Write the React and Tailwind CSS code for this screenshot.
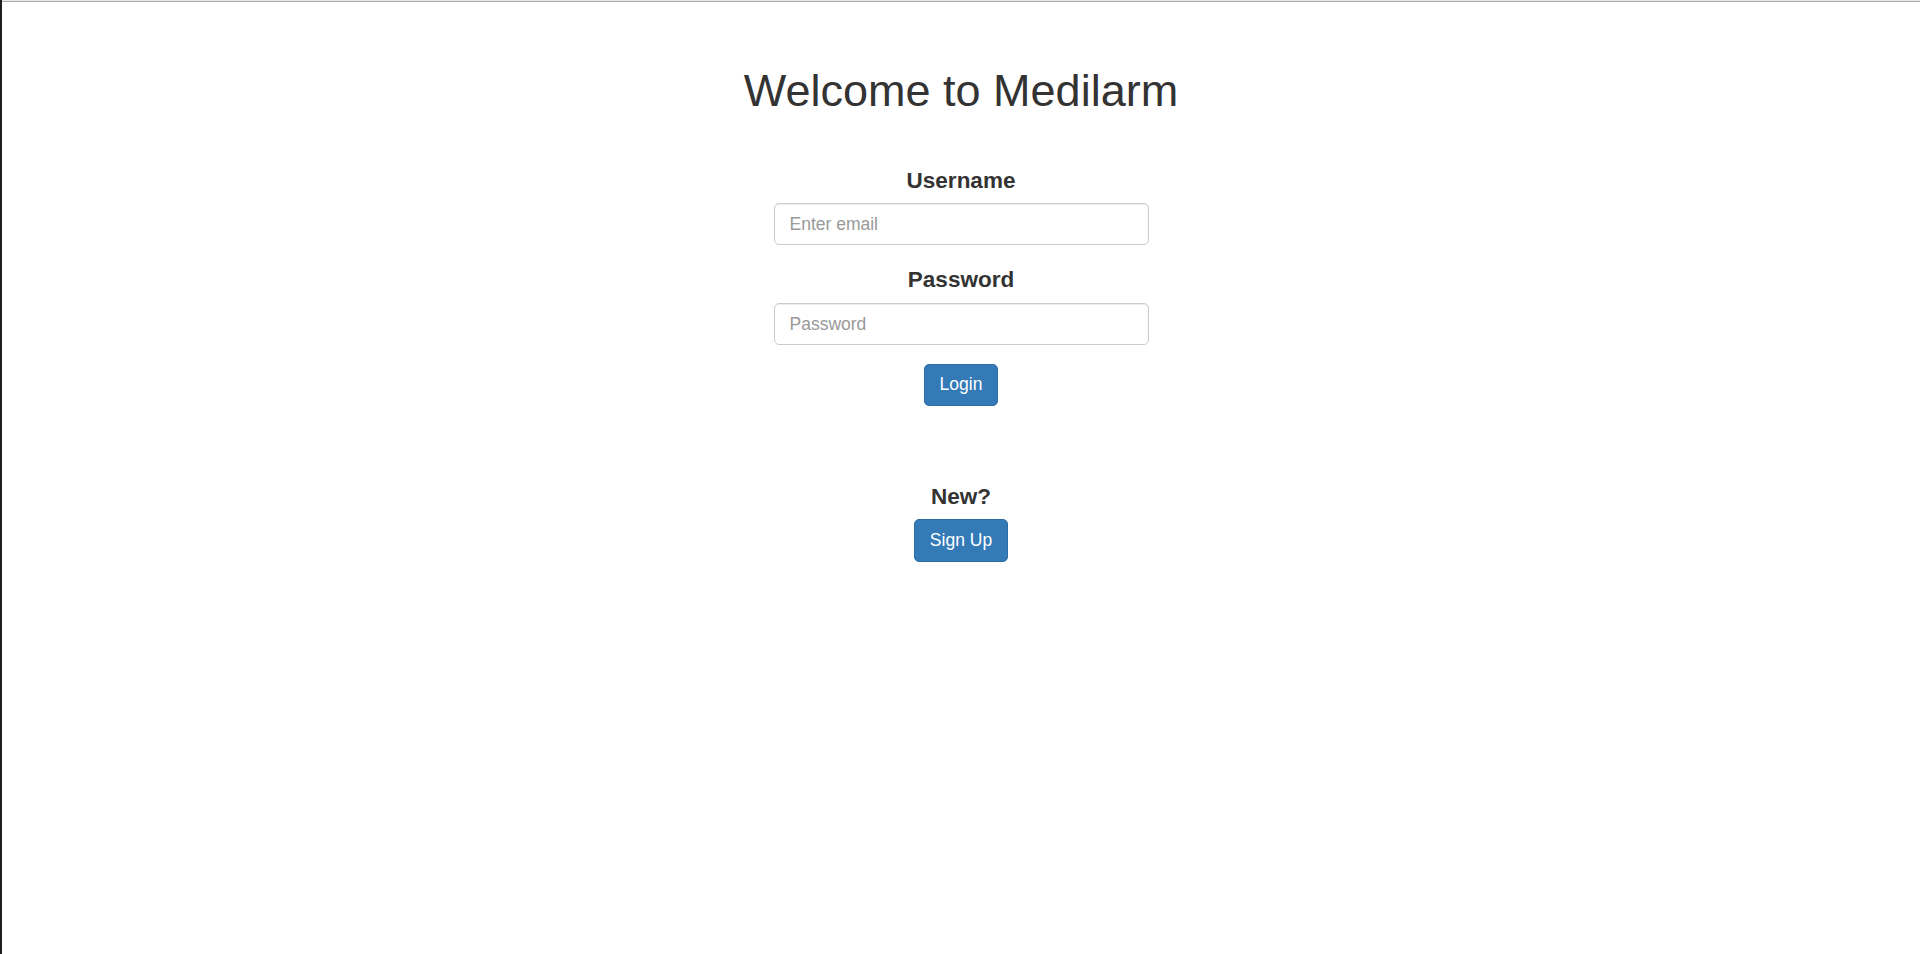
import React from "react";

export default function App() {
  return (
    <div
      className="min-h-[954px] bg-white border-l-2 border-[#1e1e1e] text-[#333333]"
      style={{ fontFamily: '"Liberation Sans", Arial, sans-serif' }}
    >
      <div className="h-px bg-[#e8e8e8]" />
      <div className="h-px bg-[#ababab]" />
      <div className="flex flex-col items-center">
        <h1 className="mt-[64px] text-[45px] leading-[50px] font-normal">Welcome to Medilarm</h1>

        <label className="mt-[49px] text-[22.5px] leading-[32px] font-bold">Username</label>
        <input
          type="email"
          placeholder="Enter email"
          className="mt-[6px] w-[375px] h-[42px] px-[15px] border border-[#cccccc] rounded-[5px] text-[17.5px] text-[#555] placeholder:text-[#999999] outline-none"
          style={{ boxShadow: "inset 0 1px 1px rgba(0,0,0,.075)" }}
        />

        <label className="mt-[19px] text-[22.5px] leading-[32px] font-bold">Password</label>
        <input
          type="password"
          placeholder="Password"
          className="mt-[7px] w-[375px] h-[42px] px-[15px] border border-[#cccccc] rounded-[5px] text-[17.5px] text-[#555] placeholder:text-[#999999] outline-none"
          style={{ boxShadow: "inset 0 1px 1px rgba(0,0,0,.075)" }}
        />

        <button className="mt-[19px] h-[42px] px-[15px] bg-[#337ab7] border border-[#2e6da4] rounded-[5px] text-white text-[17.5px] leading-none">
          Login
        </button>

        <div className="mt-[75px] text-[22.5px] leading-[32px] font-bold">New?</div>
        <button className="mt-[6px] h-[43px] px-[15px] bg-[#337ab7] border border-[#2e6da4] rounded-[5px] text-white text-[17.5px] leading-none">
          Sign Up
        </button>
      </div>
    </div>
  );
}
